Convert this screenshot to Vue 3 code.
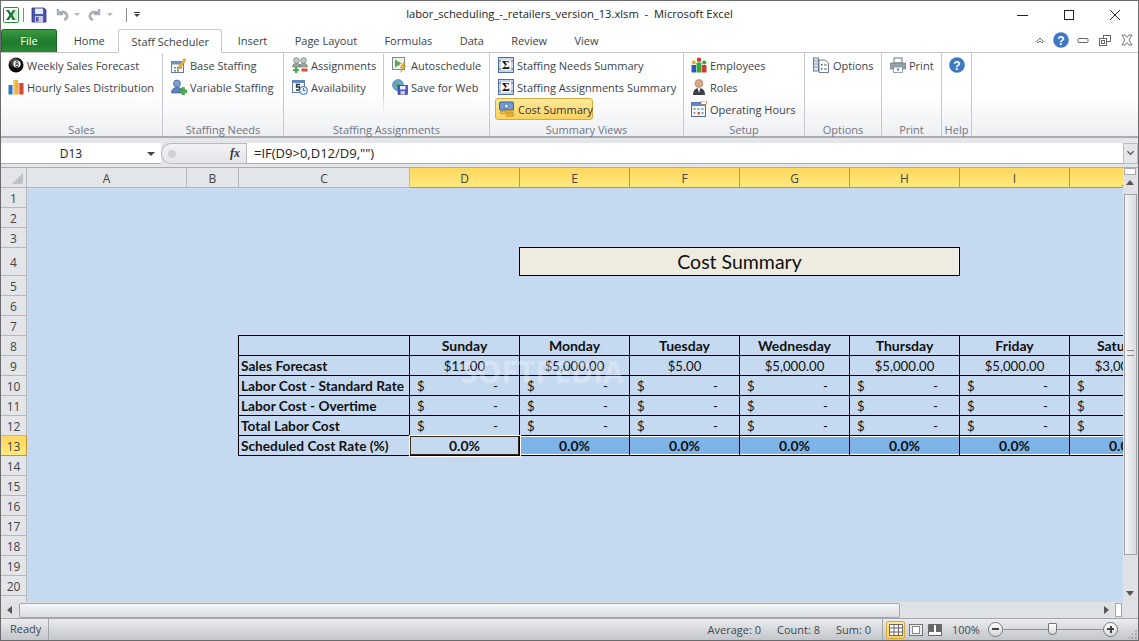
<template>
  <div class="window">
    <header class="titlebar">
      <div class="qat">
        <svg class="ico xl" viewBox="0 0 16 16"><rect x=".5" y=".5" width="15" height="15" rx="1" fill="#fff" stroke="#2e8b45"/><rect x="9" y="3" width="5" height="10" fill="#cfe6d3"/><path d="M3 3h3l2 3 2-3h2.500L9.500 8l3 5H9.500L8 10l-2 3H3l3.500-5z" fill="#1d7a3a"/></svg>
        <i class="qsep"></i>
        <svg class="ico save" viewBox="0 0 16 16"><path d="M1 1h12l2 2v12H1z" fill="#4a55b5" stroke="#2b3288" stroke-width=".8"/><rect x="4" y="1.500" width="8" height="5.500" fill="#e8ecf5"/><rect x="4" y="9" width="8" height="6" fill="#c9cbe4"/><rect x="5" y="10" width="2.500" height="4.500" fill="#4a55b5"/></svg>
        <svg class="ico undo" viewBox="0 0 14 14"><path d="M3 1v5h5M3.500 5.500C6 3 11 3.500 12 7c.5 2-.5 4-3 5" fill="none" stroke="#a9adb3" stroke-width="2.400"/></svg>
        <i class="caret grey"></i>
        <svg class="ico redo" viewBox="0 0 14 14"><path d="M11 1v5H6M10.500 5.500C8 3 3 3.500 2 7c-.5 2 .5 4 3 5" fill="none" stroke="#a9adb3" stroke-width="2.400"/></svg>
        <i class="caret grey"></i>
        <i class="qsep second"></i>
        <span class="customize"><i class="bar"></i><i class="caret"></i></span>
      </div>
      <div class="doc-title">labor_scheduling_-_retailers_version_13.xlsm&nbsp; -&nbsp; Microsoft Excel</div>
      <div class="winctl">
        <svg viewBox="0 0 46 30"><path d="M17 15.500h11" stroke="#222"/></svg>
        <svg viewBox="0 0 46 30"><rect x="18.500" y="10.500" width="9" height="9" fill="none" stroke="#222"/></svg>
        <svg viewBox="0 0 46 30"><path d="M18 10l10 10M28 10L18 20" stroke="#222"/></svg>
      </div>
    </header>

    <nav class="tabs">
      <span class="file-tab">File</span>
      <span v-for="t in tabs" :key="t" class="tab" :class="{ current: t === 'Staff Scheduler' }">{{ t }}</span>
      <div class="mini">
        <svg class="m1" viewBox="0 0 10 10"><path d="M1.500 6.500L5 3l3.500 3.500L7 8 5 6 3 8z" fill="#fff" stroke="#555" stroke-width=".9"/></svg>
        <svg class="m2" viewBox="0 0 16 16"><circle cx="8" cy="8" r="7.800" fill="#3f78c6"/><text x="8" y="12.500" class="q">?</text></svg>
        <svg class="m3" viewBox="0 0 12 12"><rect x="1" y="4.500" width="10" height="4" rx="1" fill="#fff" stroke="#666"/></svg>
        <svg class="m4" viewBox="0 0 12 12"><rect x="4.500" y="1.500" width="7" height="6" fill="#fff" stroke="#666"/><rect x=".5" y="4.500" width="7" height="7" fill="#fff" stroke="#666"/><rect x="2.500" y="6.500" width="3" height="3" fill="none" stroke="#666"/></svg>
        <svg class="m5" viewBox="0 0 12 12"><path d="M1 1h3l2 2.500L8 1h3L8 6l3 5H8L6 8.500 4 11H1l3-5z" fill="#fff" stroke="#777"/></svg>
      </div>
    </nav>

    <section class="ribbon">
      <div class="group g-sales">
        <div class="items">
          <span class="cmd"><svg class="ico" viewBox="0 0 16 16"><defs><radialGradient id="ball" cx=".4" cy=".3" r=".8"><stop offset="0" stop-color="#777"/><stop offset=".5" stop-color="#111"/><stop offset="1" stop-color="#000"/></radialGradient></defs><circle cx="8" cy="8" r="7.500" fill="url(#ball)"/><circle cx="9" cy="7" r="3.600" fill="#fff"/><circle cx="9" cy="5.700" r="1.200" fill="none" stroke="#111" stroke-width=".8"/><circle cx="9" cy="8.300" r="1.400" fill="none" stroke="#111" stroke-width=".8"/></svg>Weekly Sales Forecast</span>
          <span class="cmd"><svg class="ico" viewBox="0 0 16 16"><rect x=".5" y="6" width="4" height="9.500" fill="#2f78cf"/><rect x="5" y="1" width="5" height="14.500" fill="#f0b429"/><rect x="10.500" y="4" width="5" height="11.500" fill="#d8452c"/><path d="M5 1h2v14.500H5zM10.500 4h1.500v11.500h-1.500z" fill="#fff" opacity=".35"/></svg>Hourly Sales Distribution</span>
        </div>
        <div class="glabel">Sales</div>
      </div>
      <div class="group g-needs">
        <div class="items">
          <span class="cmd"><svg class="ico" viewBox="0 0 16 16"><rect x=".5" y="4.500" width="12" height="11" fill="#fff" stroke="#5e7ea8"/><rect x=".5" y="4.500" width="12" height="3" fill="#6f93c4"/><path d="M3 10h2v1.500H3zM6 10h2v1.500H6zM9 10h2v1.500H9zM3 13h2v1.500H3zM6 13h2v1.500H6z" fill="#6f7f96"/><path d="M7 10l6-8.500 2 1.500-6 8.500-2.500 1z" fill="#f0b43a" stroke="#a8742a" stroke-width=".5"/></svg>Base Staffing</span>
          <span class="cmd"><svg class="ico" viewBox="0 0 16 16"><circle cx="6" cy="4.500" r="3.500" fill="#7f9fce" stroke="#3f5f95" stroke-width=".7"/><path d="M.5 14c0-4 2.500-5.500 5.500-5.500s5 1 5.500 3V14z" fill="#5f82bd" stroke="#3f5f95" stroke-width=".7"/><path d="M11 8.500h2.500V11H16v2.500h-2.500V16H11v-2.500H8.500V11H11z" fill="#4cb050" stroke="#2a7a30" stroke-width=".5"/></svg>Variable Staffing</span>
        </div>
        <div class="glabel">Staffing Needs</div>
      </div>
      <div class="group g-assign">
        <div class="items two">
          <div class="col">
            <span class="cmd"><svg class="ico" viewBox="0 0 16 16"><circle cx="4.500" cy="3.500" r="2.800" fill="#c4ccc6" stroke="#6a7570" stroke-width=".7"/><circle cx="11.500" cy="3.500" r="2.800" fill="#c4ccc6" stroke="#6a7570" stroke-width=".7"/><path d="M.5 10c0-3 2-3.500 4-3.500s4 .5 4 3.500zM7.500 10c0-3 2-3.500 4-3.500s4 .5 4 3.500z" fill="#9aa7a0" stroke="#6a7570" stroke-width=".6"/><path d="M3 10h2.200v2H7v2H5.200v2H3v-2H1v-2h2z" fill="#3fae49"/><rect x="9.500" y="11.500" width="6" height="3" fill="#e04a3a"/></svg>Assignments</span>
            <span class="cmd"><svg class="ico" viewBox="0 0 16 16"><rect x=".5" y="1.500" width="12" height="12" fill="#f6f8fc" stroke="#5e7ea8"/><rect x=".5" y="1.500" width="12" height="2.500" fill="#5f8ac4"/><path d="M8 5.500H4.500v2.500H7.500v3H4" fill="none" stroke="#333" stroke-width="1.300"/><circle cx="11.500" cy="11.500" r="4" fill="#e4eefb" stroke="#3e6fb0"/><path d="M11.500 9v2.500h2" fill="none" stroke="#3e6fb0"/></svg>Availability</span>
          </div>
          <i class="vsep"></i>
          <div class="col">
            <span class="cmd"><svg class="ico" viewBox="0 0 16 16"><rect x=".5" y=".5" width="12" height="12" fill="#eef3ea" stroke="#7d8b99"/><path d="M3 2.500l6.500 4L3 10.500z" fill="#5da557"/><path d="M11.500 5.500L8 11h2.500L8.500 15.500 14 9h-2.500l2-3.500z" fill="#f0b528" stroke="#b67f10" stroke-width=".4"/></svg>Autoschedule</span>
            <span class="cmd"><svg class="ico" viewBox="0 0 16 16"><circle cx="6" cy="6" r="5.500" fill="#63a8dc" stroke="#3b6f9e" stroke-width=".6"/><path d="M3 3l3 1 1 3-3 1zM8 2l2 1-1 2z" fill="#5fb055"/><rect x="6" y="6.500" width="9.500" height="9" fill="#4a55b5" stroke="#2b3288" stroke-width=".6"/><rect x="8" y="7" width="5.500" height="3.500" fill="#eef"/><rect x="8.500" y="12" width="4.500" height="3.500" fill="#c9cbe4"/></svg>Save for Web</span>
          </div>
        </div>
        <div class="glabel">Staffing Assignments</div>
      </div>
      <div class="group g-views">
        <div class="items">
          <span class="cmd"><svg class="ico" viewBox="0 0 16 16"><rect x=".5" y=".5" width="15" height="15" fill="#c8d6ea" stroke="#4f6f9c"/><path d="M.5 4h15M.5 12h15" stroke="#4f6f9c"/><rect x="3" y="3" width="10" height="10" fill="#fff"/><text x="8" y="12.300" class="sig">Σ</text></svg>Staffing Needs Summary</span>
          <span class="cmd"><svg class="ico" viewBox="0 0 16 16"><rect x=".5" y=".5" width="15" height="15" fill="#c8d6ea" stroke="#4f6f9c"/><path d="M.5 4h15M.5 12h15" stroke="#4f6f9c"/><rect x="3" y="3" width="10" height="10" fill="#fff"/><text x="8" y="12.300" class="sig">Σ</text></svg>Staffing Assignments Summary</span>
          <span class="cmd on"><svg class="ico" viewBox="0 0 16 16"><rect x=".5" y="1" width="14" height="8" rx="1" fill="#6f9ad6" stroke="#3a5f99"/><circle cx="7.500" cy="5" r="2" fill="#dfeafa" stroke="#3a5f99" stroke-width=".6"/><ellipse cx="11" cy="10.500" rx="4" ry="1.400" fill="#f0bd3a" stroke="#a87714" stroke-width=".5"/><ellipse cx="11" cy="12.500" rx="4" ry="1.400" fill="#f0bd3a" stroke="#a87714" stroke-width=".5"/><ellipse cx="11" cy="14.500" rx="4" ry="1.400" fill="#f0bd3a" stroke="#a87714" stroke-width=".5"/><ellipse cx="4" cy="11.500" rx="3.500" ry="1.200" fill="#f0bd3a" stroke="#a87714" stroke-width=".5"/></svg>Cost Summary</span>
        </div>
        <div class="glabel">Summary Views</div>
      </div>
      <div class="group g-setup">
        <div class="items">
          <span class="cmd"><svg class="ico" viewBox="0 0 16 16"><circle cx="2.800" cy="5.500" r="2" fill="#e8b020"/><path d="M.5 8h4.500v7.500H.5z" fill="#2b56c4"/><circle cx="8" cy="2.800" r="2.200" fill="#d8392b"/><path d="M5.500 5.500H10.500v10H5.500z" fill="#36a83f"/><circle cx="13.200" cy="5.500" r="2" fill="#3aa040"/><path d="M11 8h4.500v7.500H11z" fill="#d8392b"/></svg>Employees</span>
          <span class="cmd"><svg class="ico" viewBox="0 0 16 16"><circle cx="8" cy="4.500" r="4" fill="#d9a88a" stroke="#96684e" stroke-width=".5"/><path d="M2 16c0-5 2.500-7 6-7s6 2 6 7z" fill="#3d3f45"/><path d="M6.500 9h3L8 14z" fill="#f2f2f2"/></svg>Roles</span>
          <span class="cmd"><svg class="ico" viewBox="0 0 16 16"><rect x=".5" y="1.500" width="14" height="14" fill="#f4f7fc" stroke="#4f6f9c"/><rect x=".5" y="1.500" width="14" height="3.500" fill="#5f8ac4"/><rect x="10" y="0" width="5.500" height="3.500" fill="#fff" stroke="#b0622c" stroke-width=".6"/><path d="M2.500 7h2v2h-2zM6.500 7h2v2h-2zM10.500 7h2v2h-2zM2.500 11h2v2h-2zM10.500 11h2v2h-2z" fill="#88a4cc"/><rect x="6.500" y="11" width="2.500" height="2.500" fill="#e8632c"/></svg>Operating Hours</span>
        </div>
        <div class="glabel">Setup</div>
      </div>
      <div class="group g-options">
        <div class="items">
          <span class="cmd"><svg class="ico" viewBox="0 0 16 16"><rect x=".5" y="1" width="5" height="13" fill="#dfe5ee" stroke="#6b7c94"/><path d="M.5 4h5M.5 7h5M.5 10h5" stroke="#6b7c94" stroke-width=".7"/><path d="M6 3h6l3.500 3v9.500H6z" fill="#fff" stroke="#6b7c94"/><path d="M8 7h1.500v1.500H8zM8 11h1.500v1.500H8z" fill="#556"/><path d="M11 8h3M11 12h3" stroke="#667"/></svg>Options</span>
        </div>
        <div class="glabel">Options</div>
      </div>
      <div class="group g-print">
        <div class="items">
          <span class="cmd"><svg class="ico" viewBox="0 0 16 16"><rect x="4" y="1" width="8" height="5" fill="#fff" stroke="#6f7780"/><path d="M.5 6h15v6h-15z" fill="#9aa3ad" stroke="#666e78" stroke-width=".7"/><rect x="3.500" y="10" width="9" height="5.500" fill="#fff" stroke="#6f7780" stroke-width=".7"/><rect x="7" y="11.500" width="2" height="2" fill="#3f78c6"/><rect x="11" y="7.500" width="2.500" height="1" fill="#5cc25c"/></svg>Print</span>
        </div>
        <div class="glabel">Print</div>
      </div>
      <div class="group g-help">
        <div class="items">
          <span class="cmd"><svg class="ico" viewBox="0 0 16 16"><circle cx="8" cy="8" r="7.800" fill="#3f78c6"/><text x="8" y="12.500" class="q">?</text></svg></span>
        </div>
        <div class="glabel">Help</div>
      </div>
    </section>

    <div class="formula-row">
      <div class="namebox"><span>D13</span><i class="caret dark"></i></div>
      <div class="fxpill"><i class="knob"></i><em>fx</em></div>
      <div class="fbox">=IF(D9&gt;0,D12/D9,"")</div>
      <div class="fdown"><svg viewBox="0 0 10 8"><path d="M1.500 1.500L5 5l3.500-3.500" fill="none" stroke="#555" stroke-width="1.600"/></svg></div>
    </div>

    <div class="sheet-wrap">
      <div class="sheet">
        <div class="grid">
          <div class="hd corner"><i></i></div>
          <div v-for="c in colNames" :key="c" class="hd col-hd" :class="{ sel: selCols.includes(c) }">{{ c }}</div>
          <div
            v-for="r in rowNums"
            :key="r"
            class="hd row-hd"
            :class="{ sel: r === 13 }"
            :style="{ gridRow: r + 1, gridColumn: 1 }"
          >{{ r < 21 ? r : '' }}</div>
          <div
            v-for="cell in cells"
            :key="cell.id"
            class="cell"
            :class="cell.cls"
            :style="{ gridRow: cell.row + 1, gridColumn: cell.col + ' / span ' + (cell.span || 1) }"
          >
            <template v-if="cell.acct"><span>$</span><span>-</span></template>
            <template v-else>{{ cell.text }}</template>
          </div>
        </div>
        <div class="watermark">SOFTPEDIA</div>
      </div>
      <div class="vscroll">
        <i class="split-h"></i>
        <i class="arrow up"></i>
        <i class="vthumb"></i>
        <i class="arrow down"></i>
      </div>
    </div>

    <div class="hscroll">
      <i class="arrow left"></i>
      <i class="hthumb"></i>
      <i class="arrow right"></i>
      <i class="split-v"></i>
    </div>

    <footer class="statusbar">
      <span class="ready">Ready</span>
      <div class="stats">
        <span>Average: 0</span>
        <span>Count: 8</span>
        <span>Sum: 0</span>
      </div>
      <div class="views">
        <span class="vbtn on"><svg viewBox="0 0 14 12"><path d="M.5.500h13v11H.500zM.5 4h13M.5 8h13M5 .5v11M9.500.5v11" fill="#fff" stroke="#666"/></svg></span>
        <span class="vbtn"><svg viewBox="0 0 14 12"><rect x=".5" y=".5" width="13" height="11" fill="#e8eaee" stroke="#777"/><rect x="3.500" y="2.500" width="7" height="7" fill="#fff" stroke="#888"/></svg></span>
        <span class="vbtn"><svg viewBox="0 0 14 12"><path d="M.5.500h13v11H.500z" fill="#fff" stroke="#666"/><path d="M1 8h5V1H1zM8 8h5V1H8z" fill="#666"/></svg></span>
      </div>
      <span class="zoom-pct">100%</span>
      <div class="zoomer">
        <i class="zbtn"><b></b></i>
        <div class="track"><i class="thumb"></i></div>
        <i class="zbtn plus"><b></b></i>
      </div>
      <i class="grip"></i>
    </footer>
  </div>
</template>

<script setup>
const tabs = ['Home', 'Staff Scheduler', 'Insert', 'Page Layout', 'Formulas', 'Data', 'Review', 'View']
const colNames = ['A', 'B', 'C', 'D', 'E', 'F', 'G', 'H', 'I', 'J']
const selCols = ['D', 'E', 'F', 'G', 'H', 'I', 'J']
const rowNums = Array.from({ length: 21 }, (_, i) => i + 1)

const days = ['Sunday', 'Monday', 'Tuesday', 'Wednesday', 'Thursday', 'Friday', 'Saturday']
const forecast = ['$11.00', '$5,000.00', '$5.00', '$5,000.00', '$5,000.00', '$5,000.00', '$3,000.00']
const labels = {
  8: '',
  9: 'Sales Forecast',
  10: 'Labor Cost - Standard Rate',
  11: 'Labor Cost - Overtime',
  12: 'Total Labor Cost',
  13: 'Scheduled Cost Rate (%)',
}

// grid column 1 is the row header, so column D is 5
const cells = [{ id: 'title', row: 4, col: 6, span: 4, text: 'Cost Summary', cls: 'title-cell' }]
for (const r of [8, 9, 10, 11, 12, 13]) {
  cells.push({ id: 'C' + r, row: r, col: 4, text: labels[r], cls: ['tb', 'label', { top: r === 8 }, { rate: r === 13 }] })
  days.forEach((day, i) => {
    const c = { id: r + '-' + i, row: r, col: 5 + i, cls: ['tb', { top: r === 8 }] }
    if (r === 8) {
      c.text = day
      c.cls.push('day')
    } else if (r === 9) {
      c.text = forecast[i]
      c.cls.push('num')
    } else if (r === 13) {
      c.text = '0.0%'
      c.cls.push('rate', i === 0 ? 'picked' : 'fill')
    } else {
      c.acct = true
      c.cls.push('acct')
    }
    cells.push(c)
  })
}
</script>

<style scoped>
.window {
  width: 1139px;
  height: 641px;
  display: flex;
  flex-direction: column;
  overflow: hidden;
  box-sizing: border-box;
  border: 1px solid #6b6b6b;
  background: #fff;
  font-family: "Open Sans", "Noto Sans", sans-serif;
  font-size: 11px;
  color: #3b3f4a;
}
.ico { width: 16px; height: 16px; flex: none; }

/* title bar */
.titlebar {
  height: 27px;
  flex: none;
  display: flex;
  align-items: center;
  position: relative;
}
.qat { display: flex; align-items: center; padding-left: 2px; }
.qsep { width: 1px; height: 14px; background: #8a8a8a; margin: 0 7px 0 4px; }
.qsep.second { margin: 0 5px 0 5px; }
.save { margin-right: 8px; }
.undo, .redo { width: 14px; height: 14px; }
.caret {
  width: 0;
  height: 0;
  border: 3px solid transparent;
  border-top: 3px solid #444;
  border-bottom: 0;
}
.caret.grey { border-top-color: #b5b8bd; margin: 0 8px 0 5px; }
.customize { display: flex; flex-direction: column; align-items: center; gap: 1px; margin-left: 2px; }
.customize .bar { width: 6px; height: 1px; background: #333; }
.doc-title {
  position: absolute;
  left: 0;
  right: 0;
  top: 5px;
  text-align: center;
  font-size: 11.2px;
  color: #222;
}
.winctl { margin-left: auto; display: flex; }
.winctl svg { width: 46px; height: 30px; }

/* tabs */
.tabs {
  height: 25px;
  flex: none;
  display: flex;
  align-items: flex-end;
  position: relative;
  border-bottom: 1px solid #c3c6ca;
  box-sizing: border-box;
}
.file-tab {
  width: 56px;
  height: 23px;
  margin-right: 3px;
  box-sizing: border-box;
  background: linear-gradient(#3c9a3f, #1e7a2c 55%, #2b8a35);
  border: 1px solid #1c6b28;
  border-bottom: 0;
  border-radius: 3px 3px 0 0;
  color: #fff;
  text-align: center;
  line-height: 22px;
}
.tab {
  padding: 0 13.7px;
  height: 24px;
  line-height: 23px;
  box-sizing: border-box;
  margin-bottom: -1px;
}
.tab.current {
  background: #fff;
  border: 1px solid #c3c6ca;
  border-bottom: 1px solid #fff;
  border-radius: 3px 3px 0 0;
  padding: 0 12px;
  margin: 0 2px -1px 0;
}
.mini {
  position: absolute;
  right: 0;
  top: 0;
  display: flex;
  align-items: center;
  height: 24px;
}
.mini svg { width: 12px; height: 12px; margin-right: 10px; }
.mini .m1 { width: 10px; height: 10px; margin-right: 8px; }
.mini .m2 { width: 16px; height: 16px; margin-right: 8px; }
.mini .m5 { margin-right: 5px; }
.q {
  font-family: "Liberation Sans", sans-serif;
  font-size: 12px;
  font-weight: bold;
  fill: #fff;
  text-anchor: middle;
}
.sig {
  font-family: "Liberation Serif", serif;
  font-size: 12px;
  font-weight: bold;
  fill: #111;
  text-anchor: middle;
}

/* ribbon */
.ribbon {
  height: 85px;
  flex: none;
  display: flex;
  background: linear-gradient(#fff 50%, #edeff2);
  border-bottom: 2px solid #a9acb0;
  box-sizing: border-box;
}
.group {
  display: flex;
  flex-direction: column;
  border-right: 1px solid #c5c8cc;
  box-sizing: border-box;
  flex: none;
}
.g-sales { width: 162px; }
.g-needs { width: 121px; }
.g-assign { width: 206px; }
.g-views { width: 194px; }
.g-setup { width: 121px; }
.g-options { width: 77px; }
.g-print { width: 60px; }
.g-help { width: 30px; }
.items {
  height: 70px;
  flex: none;
  display: flex;
  flex-direction: column;
  padding: 1px 0 0 7px;
  box-sizing: border-box;
}
.g-needs .items, .g-views .items, .g-options .items, .g-print .items { padding-left: 8px; }
.g-options .cmd { gap: 4px; }
.items.two { flex-direction: row; padding-left: 0; }
.col { display: flex; flex-direction: column; padding-left: 8px; width: 92px; }
.vsep {
  width: 1px;
  height: 62px;
  background: linear-gradient(#c5c8cc 60%, transparent);
  margin-left: -1px;
}
.cmd {
  height: 22px;
  display: flex;
  align-items: center;
  gap: 3px;
  white-space: nowrap;
  color: #3b3f4a;
}
.cmd.on {
  margin-left: -3px;
  padding-left: 3px;
  width: 98px;
  box-sizing: border-box;
  background: linear-gradient(#fde99a, #fbd25f);
  border: 1px solid #d9a93f;
  border-radius: 3px;
  color: #333;
}
.glabel {
  height: 13px;
  text-align: center;
  color: #6e7585;
  line-height: 13px;
}

/* formula bar */
.formula-row {
  height: 30px;
  flex: none;
  display: flex;
  align-items: flex-start;
  background: #e4e6e9;
  padding-top: 5px;
  box-sizing: border-box;
  border-bottom: 1px solid #a9acb0;
}
.namebox {
  width: 160px;
  height: 21px;
  background: #fff;
  border-bottom: 1px solid #a9acb0;
  box-sizing: border-box;
  display: flex;
  align-items: center;
  position: relative;
  font-size: 12px;
  color: #222;
}
.namebox span { width: 140px; text-align: center; }
.caret.dark { border-width: 4px; border-top-color: #444; border-bottom: 0; position: absolute; left: 146px; top: 9px; }
.fxpill {
  width: 85px;
  height: 21px;
  background: linear-gradient(#f2f3f5, #e3e5e8);
  border: 1px solid #b8bbc0;
  border-radius: 10px 0 0 10px;
  border-right: 0;
  box-sizing: border-box;
  display: flex;
  align-items: center;
  justify-content: space-between;
  padding: 0 6px 0 6px;
}
.knob { width: 8px; height: 8px; border-radius: 50%; background: #cfd1d4; }
.fxpill em { font-family: "Liberation Serif", serif; font-weight: bold; font-size: 12px; color: #333; }
.fbox {
  flex: 1;
  height: 21px;
  background: #fff;
  border-left: 1px solid #b8bbc0;
  border-bottom: 1px solid #a9acb0;
  box-sizing: border-box;
  padding-left: 7px;
  font-size: 13px;
  line-height: 20px;
  color: #222;
}
.fdown {
  width: 15px;
  height: 21px;
  background: #e4e6e9;
  border: 1px solid #b8bbc0;
  box-sizing: border-box;
  display: flex;
  align-items: center;
  justify-content: center;
}
.fdown svg { width: 9px; height: 7px; }

/* sheet */
.sheet-wrap { flex: 1; display: flex; min-height: 0; }
.sheet { flex: 1; min-width: 0; overflow: hidden; position: relative; }
.grid {
  display: grid;
  grid-template-columns: 26px 160px 52px 171px repeat(7, 110px);
  grid-template-rows: 20px 20px 20px 20px 28px repeat(17, 20px);
  width: 1180px;
  background: #c5d9f1;
  font-family: Lato, "Liberation Sans", sans-serif;
  font-size: 14px;
  color: #111;
}
.hd {
  background: #e3e5e8;
  border-right: 1px solid #b4b7bb;
  border-bottom: 1px solid #b4b7bb;
  box-sizing: border-box;
  display: flex;
  align-items: center;
  justify-content: center;
  padding-top: 2px;
  font-family: "Open Sans", sans-serif;
  font-size: 12px;
  color: #444;
}
.corner { position: relative; }
.corner i {
  position: absolute;
  right: 3px;
  bottom: 3px;
  width: 0;
  height: 0;
  border-left: 11px solid transparent;
  border-bottom: 11px solid #bfc2c6;
}
.hd.sel {
  background: linear-gradient(#ffd75e, #ffe97f);
  border-right-color: #c5962f;
  border-bottom: 1px solid #c5962f;
}
.cell {
  box-sizing: border-box;
  display: flex;
  align-items: center;
  white-space: nowrap;
  overflow: hidden;
}
.tb {
  border-right: 1px solid #000;
  border-bottom: 1px solid #000;
}
.tb.top { border-top: 1px solid #000; margin-top: -1px; }
.label { border-left: 1px solid #000; margin-left: -1px; font-weight: bold; font-size: 13.7px; padding-left: 2px; }
.day { font-weight: bold; justify-content: center; }
.num { justify-content: center; font-size: 13.2px; }
.acct { justify-content: space-between; padding: 0 21px 0 7px; font-size: 13.2px; }
.rate { font-weight: bold; justify-content: center; }
.label.rate { justify-content: flex-start; }
.fill { background: #7db3e6; box-shadow: inset 0 1px 0 #fff, inset 0 -1px 0 #fff; }
.picked {
  box-shadow: inset 0 0 0 1px #3b2a16;
  outline: 1px solid #fff;
  z-index: 1;
}
.title-cell {
  background: #eeece1;
  border: 1px solid #000;
  margin: -1px 0 0 -1px;
  justify-content: center;
  font-size: 19.5px;
}
.watermark {
  position: absolute;
  left: 460px;
  top: 183px;
  font-family: "Open Sans", sans-serif;
  font-weight: bold;
  font-size: 30px;
  color: rgba(255, 255, 255, 0.3);
  pointer-events: none;
}

/* scrollbars */
.vscroll {
  width: 15px;
  flex: none;
  position: relative;
  background: #dfe1e5;
}
.split-h {
  position: absolute;
  left: 1px;
  top: 0;
  width: 12px;
  height: 7px;
  background: #fff;
  border: 1px solid #a9acb0;
  box-sizing: border-box;
}
.vthumb {
  position: absolute;
  left: 1px;
  top: 26px;
  width: 13px;
  height: 361px;
  background: linear-gradient(90deg, #f4f5f7, #d9dbdf);
  border: 1px solid #9fa2a7;
  box-sizing: border-box;
}
.vthumb::after {
  content: "";
  position: absolute;
  left: 2px;
  top: 155px;
  width: 7px;
  height: 6px;
  border-top: 1px solid #888;
  border-bottom: 1px solid #888;
  box-sizing: border-box;
}
.arrow { position: absolute; width: 0; height: 0; border: 4px solid transparent; }
.arrow.up { left: 3px; top: 12px; border-bottom: 5px solid #555; border-top: 0; }
.arrow.down { left: 3px; bottom: 6px; border-top: 5px solid #555; border-bottom: 0; }
.hscroll {
  height: 16px;
  flex: none;
  position: relative;
  background: #dfe1e5;
}
.arrow.left { left: 6px; top: 4px; border-right: 5px solid #555; border-left: 0; }
.arrow.right { left: 1103px; top: 4px; border-left: 5px solid #555; border-right: 0; }
.hthumb {
  position: absolute;
  left: 18px;
  top: 1px;
  width: 881px;
  height: 15px;
  background: linear-gradient(#f5f6f8, #d9dbdf);
  border: 1px solid #a3a6ab;
  border-radius: 2px;
  box-sizing: border-box;
}
.split-v {
  position: absolute;
  left: 1114px;
  top: 1px;
  width: 7px;
  height: 14px;
  background: #fff;
  border: 1px solid #a3a6ab;
  box-sizing: border-box;
}

/* status bar */
.statusbar {
  height: 22px;
  flex: none;
  display: flex;
  align-items: center;
  background: linear-gradient(#eaecef, #c3c6ca);
  border-top: 1px solid #a3a6ab;
  box-sizing: border-box;
  color: #44484f;
  position: relative;
}
.ready {
  width: 48px;
  height: 100%;
  box-sizing: border-box;
  padding-left: 9px;
  line-height: 20px;
  border-right: 1px solid #a3a6ab;
}
.stats {
  margin-left: auto;
  display: flex;
  gap: 16px;
  margin-right: 11px;
}
.views {
  display: flex;
  gap: 2px;
  align-items: center;
  height: 100%;
  border-left: 1px solid #a3a6ab;
  padding-left: 3px;
}
.vbtn { width: 17px; height: 18px; display: flex; align-items: center; justify-content: center; box-sizing: border-box; }
.vbtn svg { width: 14px; height: 12px; }
.vbtn.on { width: 19px; background: linear-gradient(#fde99a, #fbd25f); border: 1px solid #d9a93f; border-radius: 2px; }
.zoom-pct { margin-left: 9px; width: 32px; }
.zoomer { display: flex; align-items: center; margin: 0 20px 0 4px; }
.zbtn {
  width: 15px;
  height: 15px;
  border: 1px solid #777;
  border-radius: 50%;
  background: linear-gradient(#fff, #d5d7db);
  box-sizing: border-box;
  position: relative;
  flex: none;
}
.zbtn b { position: absolute; left: 3px; top: 5px; width: 7px; height: 2px; background: #444; }
.zbtn.plus::after { content: ""; position: absolute; left: 5.500px; top: 2.500px; width: 2px; height: 7px; background: #444; }
.track { width: 100px; height: 1px; background: #8f9297; position: relative; }
.thumb {
  position: absolute;
  left: 45px;
  top: -6px;
  width: 9px;
  height: 12px;
  background: linear-gradient(#fff, #d5d7db);
  border: 1px solid #777;
  border-radius: 1px 1px 4px 4px;
  box-sizing: border-box;
}
.grip {
  position: absolute;
  right: 1px;
  bottom: 1px;
  width: 10px;
  height: 10px;
  background: radial-gradient(circle, #9a9da2 1px, transparent 1.2px) 0 0 / 3.500px 3.500px;
  clip-path: polygon(100% 0, 100% 100%, 0 100%);
}
</style>

<style>
body { overflow: hidden; }
</style>
